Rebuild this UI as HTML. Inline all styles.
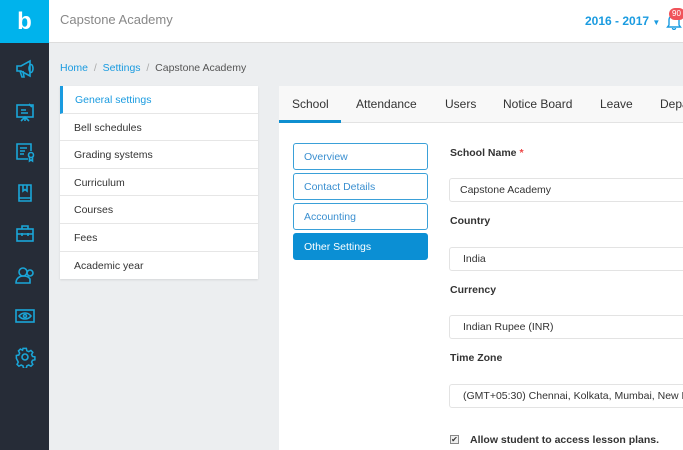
<!DOCTYPE html>
<html><head><style>
*{box-sizing:border-box;margin:0;padding:0}
body{width:683px;height:450px;overflow:hidden;background:#eceef0;font-family:"Liberation Sans",sans-serif;position:relative;font-size:11px;color:#333}
.sb{position:absolute;left:0;top:0;width:49px;height:450px;background:#262c37}
.logo{position:absolute;left:0;top:0;width:49px;height:43px;background:#00b3ec;color:#fff;font-weight:bold;font-size:24px;text-align:center;line-height:43px}
.hd{position:absolute;left:49px;top:0;right:0;height:43px;background:#fff;border-bottom:1px solid #ddd}
.ic{position:absolute;left:14px;width:22px;height:22px}
.abs{position:absolute}
.menu{position:absolute;left:60px;top:86px;width:198px;background:#fff;box-shadow:0 1px 2px rgba(0,0,0,.1)}
.menu div{height:27.6px;line-height:28px;padding-left:14px;border-bottom:1px solid #e6e6e6;font-size:10.5px;color:#333}
.card{position:absolute;left:279px;top:86px;right:0;bottom:0;background:#fff}
.tabs{height:37px;background:#f8f8f8;border-bottom:1px solid #e3e3e3;position:relative}
.tabs span{position:absolute;top:11px;font-size:12px;color:#333}
.btn{position:absolute;left:293px;width:135px;height:27px;border:1px solid #3aa0d8;border-radius:3px;color:#3a8fd0;font-size:10.5px;line-height:27px;padding-left:10px}
.lbl{position:absolute;left:450px;font-size:10.5px;font-weight:bold;color:#333}
.inp{position:absolute;left:449px;width:240px;height:24px;border:1px solid #e3e3e3;border-radius:3px;font-size:10.5px;line-height:23px;padding-left:10px;color:#333;white-space:nowrap;overflow:hidden}
</style></head><body>
<div class="sb"></div>
<div class="logo">b</div>
<svg class="ic" style="top:58px" viewBox="0 0 22 22" fill="none" stroke="#1aa6d8" stroke-width="1.6"><path d="M3 8h4l9-5v15l-9-5H3z"/><path d="M6 13l2 6h2l-1-6"/><ellipse cx="17" cy="10.5" rx="2" ry="4"/></svg>
<svg class="ic" style="top:101px" viewBox="0 0 22 22" fill="none" stroke="#1aa6d8" stroke-width="1.6"><rect x="3" y="4" width="16" height="12"/><path d="M7 9h5M7 12h7M11 16v4M7 20l4-4 4 4M15 3l3 3"/></svg>
<svg class="ic" style="top:141px" viewBox="0 0 22 22" fill="none" stroke="#1aa6d8" stroke-width="1.6"><path d="M14 18H3V3h14v7"/><path d="M6 7h7M6 10h5M6 13h4"/><circle cx="17" cy="14" r="2.5"/><path d="M15.5 16v4l1.5-1 1.5 1v-4"/></svg>
<svg class="ic" style="top:182px" viewBox="0 0 22 22" fill="none" stroke="#1aa6d8" stroke-width="1.6"><path d="M5 3h12v16H5zM5 16h12M9 3v6l2-1.5 2 1.5V3"/></svg>
<svg class="ic" style="top:222px" viewBox="0 0 22 22" fill="none" stroke="#1aa6d8" stroke-width="1.6"><rect x="3" y="7" width="16" height="12"/><path d="M8 7V4h6v3M3 12h16M8 11v3M14 11v3"/></svg>
<svg class="ic" style="top:264px" viewBox="0 0 22 22" fill="none" stroke="#1aa6d8" stroke-width="1.6"><circle cx="9" cy="8" r="4"/><path d="M2 19c0-5 4-7 7-7s6 1 7 3v4z"/><circle cx="16" cy="9" r="3"/></svg>
<svg class="ic" style="top:305px" viewBox="0 0 22 22" fill="none" stroke="#1aa6d8" stroke-width="1.6"><rect x="2" y="5" width="18" height="12"/><path d="M5 11c3-4 9-4 12 0-3 4-9 4-12 0z"/><circle cx="11" cy="11" r="1.5"/></svg>
<svg class="ic" style="top:346px" viewBox="0 0 22 22" fill="none" stroke="#1aa6d8" stroke-width="1.6"><circle cx="11" cy="11" r="3"/><path d="M9.5 2h3l.5 2.5 2 1 2.3-1.3 2 2-1.3 2.3 1 2 2.5.5v3l-2.5.5-1 2 1.3 2.3-2 2-2.3-1.3-2 1-.5 2.5h-3l-.5-2.5-2-1-2.3 1.3-2-2 1.3-2.3-1-2L2 12.5v-3l2.5-.5 1-2-1.3-2.3 2-2L8.5 4l.5-2z" transform="scale(.95) translate(.5 .5)"/></svg>
<div class="hd">
<div class="abs" style="left:11px;top:12px;font-size:13px;color:#888">Capstone Academy</div>
<div class="abs" style="left:536px;top:14px;font-size:12px;font-weight:bold;color:#1a9be0">2016 - 2017 <span style="font-size:8px">▼</span></div>
<svg class="abs" style="left:617px;top:13px" width="16" height="17" viewBox="0 0 16 17" fill="none" stroke="#1a9be0" stroke-width="1.4"><path d="M3 12V7a5 5 0 0110 0v5l1.5 2h-13zM6.5 15a1.5 1.5 0 003 0"/></svg>
<div class="abs" style="left:620px;top:8px;width:16px;height:12px;background:#f0535a;border-radius:6px;color:#fff;font-size:8px;line-height:12px;padding-left:3px">90</div>
</div>
<div class="abs" style="left:60px;top:62px;font-size:10.5px;color:#1a9be0">Home <span style="color:#aaa">&nbsp;/&nbsp;</span> Settings <span style="color:#aaa">&nbsp;/&nbsp;</span> <span style="color:#555">Capstone Academy</span></div>
<div class="menu">
<div style="color:#1a9be0;border-left:3px solid #1a9be0;padding-left:12px">General settings</div>
<div>Bell schedules</div><div>Grading systems</div><div>Curriculum</div><div>Courses</div><div>Fees</div><div style="border:none">Academic year</div>
</div>
<div class="card"><div class="tabs">
<span style="left:13px">School</span><span style="left:77px">Attendance</span><span style="left:166px">Users</span><span style="left:224px">Notice Board</span><span style="left:321px">Leave</span><span style="left:381px">Depa</span>
<div class="abs" style="left:0;bottom:-1px;width:62px;height:3px;background:#0e8fd0"></div>
</div></div>
<div class="btn" style="top:143px">Overview</div>
<div class="btn" style="top:173px">Contact Details</div>
<div class="btn" style="top:203px">Accounting</div>
<div class="btn" style="top:233px;background:#0b8fd4;border-color:#0b8fd4;color:#fff">Other Settings</div>
<div class="lbl" style="top:147px">School Name <span style="color:#e44">*</span></div>
<div class="inp" style="top:178px">Capstone Academy</div>
<div class="lbl" style="top:215px">Country</div>
<div class="inp" style="top:247px;padding-left:13px">India</div>
<div class="lbl" style="top:284px">Currency</div>
<div class="inp" style="top:315px;padding-left:13px">Indian Rupee (INR)</div>
<div class="lbl" style="top:352px">Time Zone</div>
<div class="inp" style="top:384px;padding-left:13px">(GMT+05:30) Chennai, Kolkata, Mumbai, New Delhi</div>
<div class="abs" style="left:450px;top:435px;width:9px;height:9px;border:1px solid #888;background:#eee;font-size:8px;line-height:7px;text-align:center">✔</div>
<div class="abs" style="left:470px;top:434px;font-size:10.5px;font-weight:bold;color:#333">Allow student to access lesson plans.</div>
</body></html>
